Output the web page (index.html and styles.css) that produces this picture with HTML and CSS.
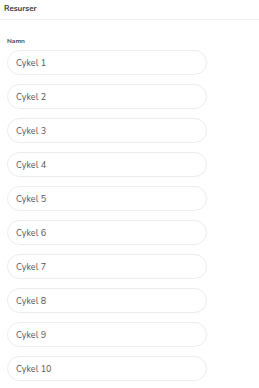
FILE: index.html
```html
<!DOCTYPE html>
<html lang="sv">
<head>
    <meta charset="UTF-8">
    <meta name="viewport" content="width=device-width, initial-scale=1.0">
    <title>Resurser</title>
    <link rel="stylesheet" href="styles.css">
</head>
<body>
    <header class="page-header">
        <h1>Resurser</h1>
    </header>

    <main class="resources">
        <label class="field-label">Namn</label>
        <div class="resource-list">
            <input class="resource-input" type="text" value="Cykel 1">
            <input class="resource-input" type="text" value="Cykel 2">
            <input class="resource-input" type="text" value="Cykel 3">
            <input class="resource-input" type="text" value="Cykel 4">
            <input class="resource-input" type="text" value="Cykel 5">
            <input class="resource-input" type="text" value="Cykel 6">
            <input class="resource-input" type="text" value="Cykel 7">
            <input class="resource-input" type="text" value="Cykel 8">
            <input class="resource-input" type="text" value="Cykel 9">
            <input class="resource-input" type="text" value="Cykel 10">
        </div>
    </main>
</body>
</html>
```

FILE: styles.css
```css
* {
    margin: 0;
    padding: 0;
    box-sizing: border-box;
}

body {
    font-family: 'Nunito', 'Inter', 'Noto Sans', sans-serif;
    color: #333;
    background-color: #ffffff;
}

/* header */
.page-header {
    height: 20px;
    padding: 4px 4px 0;
    border-bottom: 1px solid #f0f0f0;
}

.page-header h1 {
    font-size: 8px;
    font-weight: 700;
    color: #3a3a3a;
    line-height: 10px;
}

/* list */
.resources {
    padding: 17px 7px 0;
}

.field-label {
    display: block;
    font-size: 6.5px;
    font-weight: 700;
    color: #444;
    line-height: 8px;
    margin-bottom: 5px;
}

.resource-list {
    display: flex;
    flex-direction: column;
    gap: 9px;
}

.resource-input {
    width: 200px;
    height: 25px;
    padding: 0 8px;
    border: 1px solid #ececec;
    border-radius: 13px;
    font-family: inherit;
    font-size: 9px;
    color: #555;
    background: #fff;
    outline: none;
}
```
